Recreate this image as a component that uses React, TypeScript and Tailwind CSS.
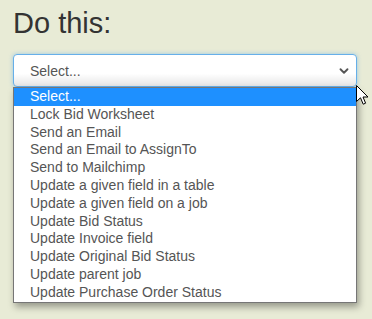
import { ChevronDown } from "lucide-react";

const actions = [
  "Select...",
  "Lock Bid Worksheet",
  "Send an Email",
  "Send an Email to AssignTo",
  "Send to Mailchimp",
  "Update a given field in a table",
  "Update a given field on a job",
  "Update Bid Status",
  "Update Invoice field",
  "Update Original Bid Status",
  "Update parent job",
  "Update Purchase Order Status",
];

function Cursor() {
  return (
    <svg
      className="absolute left-[356px] top-[85px]"
      width="13"
      height="21"
      viewBox="0 0 13 21"
    >
      <path
        d="M0.5 0.5 L0.5 16.5 L4.5 12.8 L7.2 19.2 L9.6 18.2 L7 12 L12 12 Z"
        fill="#fff"
        stroke="#000"
        strokeWidth="1"
        strokeLinejoin="round"
      />
    </svg>
  );
}

export default function App() {
  return (
    <div className="relative h-[319px] w-[372px] overflow-hidden bg-[#e8ebd6] font-['Liberation_Sans',Arial,sans-serif]">
      <h2 className="pl-[13px] pt-[7px] text-[29px] leading-[32px] text-[#333]">
        Do this:
      </h2>
      <div className="ml-[13px] mt-[15px] w-[344px]">
        <div className="flex h-[33px] items-center justify-between rounded-[4px] border border-[#66afe9] bg-gradient-to-b from-white from-60% to-[#e6e6e6] pl-[16px] pr-[5px] text-[14px] text-[#555] shadow-[0_0_4px_rgba(102,175,233,0.6)]">
          <span className="pt-[1px]">Select...</span>
          <ChevronDown size={14} strokeWidth={3.2} className="text-[#555]" />
        </div>
        <ul className="border border-[#767676] bg-white shadow-[2px_4px_7px_rgba(0,0,0,0.35)]">
          {actions.map((a, i) => (
            <li
              key={a}
              className={
                "h-[17.8px] pl-[16px] text-[14px] leading-[17.8px] " +
                (i === 0 ? "bg-[#1e90ff] text-white" : "text-[#555]")
              }
            >
              {a}
            </li>
          ))}
        </ul>
      </div>
      <Cursor />
    </div>
  );
}
